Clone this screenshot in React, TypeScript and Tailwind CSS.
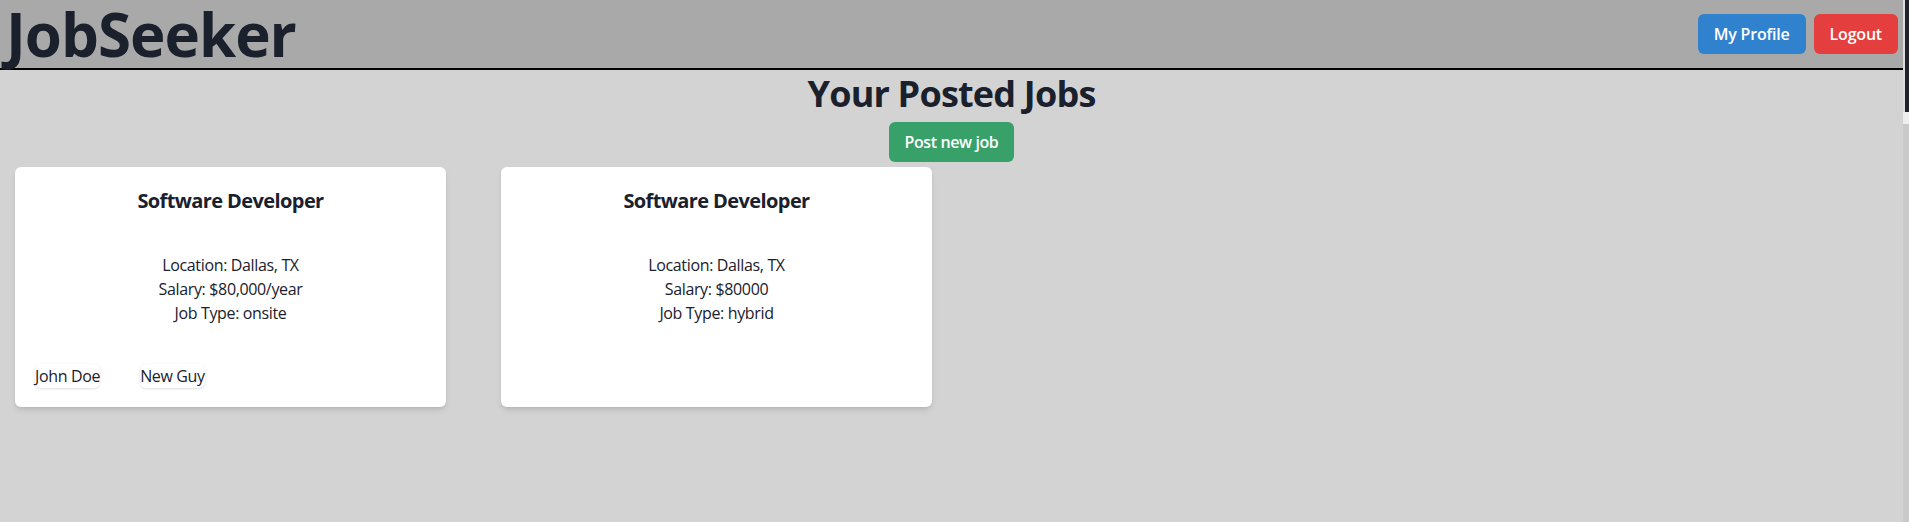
import React from "react";

const jobs = [
  {
    title: "Software Developer",
    location: "Dallas, TX",
    salary: "$80,000/year",
    type: "onsite",
    applicants: ["John Doe", "New Guy"],
  },
  {
    title: "Software Developer",
    location: "Dallas, TX",
    salary: "$80000",
    type: "hybrid",
    applicants: [] as string[],
  },
];

export default function App() {
  return (
    <div className="flex w-[1909px] h-[522px] overflow-hidden bg-[#d3d3d3] font-['Open_Sans',sans-serif] text-[#1a202c] tracking-[-0.35px]">
      <div className="w-[1903px] flex flex-col">
        <header className="h-[70px] flex items-center justify-between bg-[#a9a9a9] border-b-2 border-black">
          <h1 className="pl-[6px] text-[60px] font-bold leading-[68px] tracking-[-1px]">JobSeeker</h1>
          <div className="flex gap-2 pr-[5px]">
            <button className="h-10 px-4 rounded-md bg-[#3182ce] text-white font-semibold text-base tracking-[-0.2px]">My Profile</button>
            <button className="h-10 px-4 rounded-md bg-[#e53e3e] text-white font-semibold text-base tracking-[-0.2px]">Logout</button>
          </div>
        </header>
        <div className="flex flex-col items-center">
          <h2 className="text-4xl font-bold leading-[44px] mt-[2px] tracking-[-0.8px]">Your Posted Jobs</h2>
          <button className="h-10 px-4 mt-[6px] rounded-md bg-[#38a169] text-white font-semibold text-base tracking-[-0.4px]">Post new job</button>
        </div>
        <div className="flex gap-[55px] pl-[15px] mt-[5px]">
          {jobs.map((job, i) => (
            <div key={i} className="w-[431px] h-[240px] bg-white rounded-md shadow-md p-5 flex flex-col">
              <h3 className="text-xl font-bold text-center leading-7 tracking-[-0.6px]">{job.title}</h3>
              <div className="mt-[38px] text-center text-base leading-6">
                <p>Location: {job.location}</p>
                <p>Salary: {job.salary}</p>
                <p>Job Type: {job.type}</p>
              </div>
              {job.applicants.length > 0 && (
                <div className="mt-[39px] flex gap-10">
                  {job.applicants.map((a) => (
                    <span key={a} className="bg-white rounded-md shadow-sm leading-6">{a}</span>
                  ))}
                </div>
              )}
            </div>
          ))}
        </div>
      </div>
      <div className="w-[6px] flex flex-col">
        <div className="h-[112px] flex">
          <div className="w-[2px] bg-[#dcdcdc]" />
          <div className="w-[4px] bg-[#22222c]" />
        </div>
        <div className="h-[12px] bg-[#eeeeee]" />
        <div className="flex-1 bg-[#c9c9c9]" />
      </div>
    </div>
  );
}
